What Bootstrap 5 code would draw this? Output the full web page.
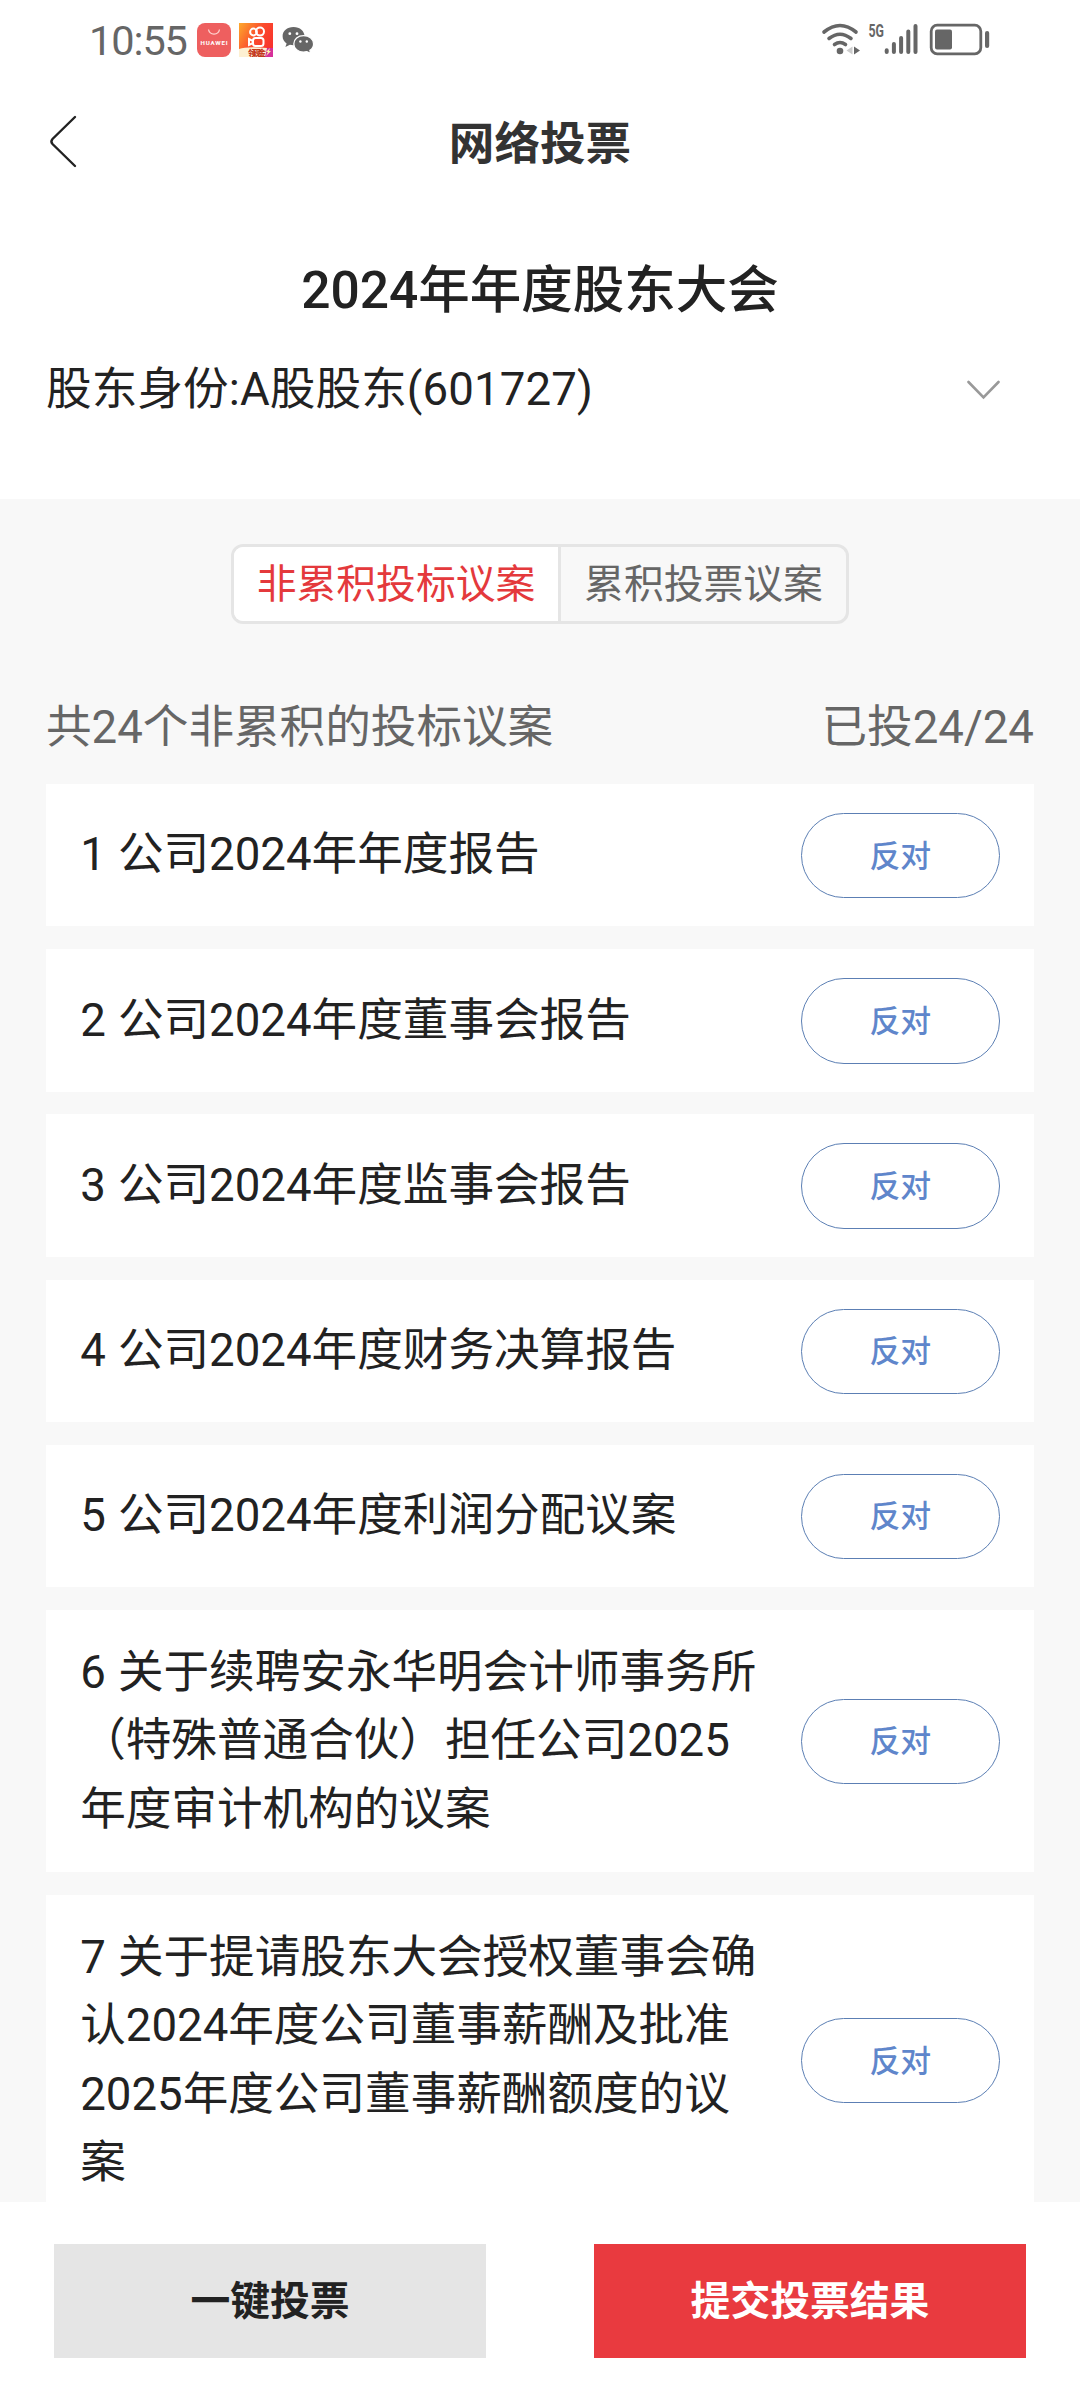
<!DOCTYPE html>
<html lang="zh-CN">
<head>
<meta charset="utf-8">
<meta name="viewport" content="width=device-width, initial-scale=1">
<title>网络投票</title>
<link href="https://cdn.jsdelivr.net/npm/bootstrap@5.3.0/dist/css/bootstrap.min.css" rel="stylesheet">
<style>
  body { font-family: Roboto, "Noto Sans CJK SC", sans-serif; font-size: 45.6px; line-height: 68.4px; color: #222; text-spacing-trim: space-all; }
  .screen { width: 1080px; height: 2400px; }
  .status-bar { height: 80px; padding: 0 89px; color: #666; }
  .clock { font-size: 41.5px; line-height: 80px; width: 108px; letter-spacing: -1.1px; padding-top: 2px; }
  .top-nav { display: grid; grid-template-columns: 120px 1fr 120px; height: 126px; color: #333; }
  .top-nav h1 { font-size: 45.6px; line-height: 68px; padding-top: 4px; }
  .meeting { height: 293px; padding: 46px 46px 0; }
  .meeting h2 { font-size: 51.5px; line-height: 77px; margin-bottom: 27px; font-weight: 500; }
  .identity { padding-right: 34px; letter-spacing: .1px; }
  .list-area { background: #f8f8f8; padding: 45px 46px 0; min-height: 0; }
  .switcher { width: 618px; height: 80px; border: 3px solid #e5e5e5; border-radius: 12px; overflow: hidden; font-size: 39.8px; }
  .switcher .btn { font-size: inherit; line-height: 60px; border: 0; border-radius: 0; color: #666; padding: 1px 0 0; }
  .switcher .btn.active { background: #fff; color: #e4393c; width: 327px; flex: none; border-right: 3px solid #e5e5e5; }
  .summary { color: #666; margin-top: 70px; margin-bottom: 21.6px; }
  .proposals { gap: 22.8px; }
  .proposal { background: #fff; border: 0; border-radius: 0; padding: 29px 34.2px 28px; flex: none; }
  .proposal p { width: 687px; word-spacing: .8px; }
  .vote-btn { width: 199px; height: 85.4px; font-size: 30.9px; color: #5f86cb; border: 1px solid #5c7fb4; font-weight: 500; padding: 2px 0 0; }
  .action-bar { height: 198px; }
  .action-bar .btn { width: 432px; height: 114px; font-size: 39.8px; border: 0; border-radius: 0; padding: 2px 0 0; }
  .btn-all, .btn-all:hover { background: #e5e5e5; color: #222; }
  .btn-submit, .btn-submit:hover { background: #e93a3f; color: #fff; }
</style>
</head>
<body class="bg-white">
<div class="screen d-flex flex-column overflow-hidden">

  <div class="status-bar d-flex align-items-center flex-shrink-0">
    <span class="clock">10:55</span>
    <svg width="34" height="34" viewBox="0 0 34 34">
      <rect width="34" height="34" rx="8" fill="#ee5f5f"/>
      <path d="M11.5 6.5a5.6 5.6 0 0 0 11 0" fill="none" stroke="#ffd3cf" stroke-width="1.3"/>
      <text x="17" y="22" text-anchor="middle" font-family="Roboto" font-weight="700" font-size="6.2" textLength="27" fill="#fff">HUAWEI</text>
    </svg>
    <svg class="ms-2" width="34" height="34" viewBox="0 0 34 34">
      <defs>
        <linearGradient id="ks" x1="0" y1="0" x2="1" y2=".6"><stop offset="0" stop-color="#fdaa2c"/><stop offset=".55" stop-color="#fb4b2c"/><stop offset="1" stop-color="#f8332d"/></linearGradient>
      </defs>
      <rect width="34" height="34" fill="url(#ks)"/>
      <g fill="none" stroke="#fff" stroke-width="2">
        <circle cx="14.5" cy="9" r="3.4"/><circle cx="21" cy="8.6" r="4"/>
        <rect x="14" y="15" width="10.5" height="8" rx="2.5"/><path d="M14 18l-4-2v6l4-2"/>
      </g>
      <path d="M0 26q8-3 28-1v9H0z" fill="#fdf0d2"/>
      <path d="M28 25h6v9h-8z" fill="#d6309a"/>
      <text x="18" y="32.8" text-anchor="middle" font-family="Noto Sans CJK SC" font-weight="900" font-size="8" textLength="18" fill="#c3371c">领现金</text>
      <path d="M31 25l-4 4h2l-2 4 5-5h-2z" fill="#fff3a8"/>
    </svg>
    <svg style="margin-left:9px" width="33" height="30" viewBox="0 0 33 30">
      <path d="M11.500 2C5 2 .6 6 .6 11.200c0 3 1.500 5.500 4 7.200L3.400 22l4.500-2.300c1.200.3 2.400.5 3.600.5 6.500 0 11-4 11-9S18 2 11.500 2z" fill="#666"/>
      <path d="M21.600 10.700c-5.600 0-9.800 3.500-9.800 8.200s4.200 8.200 9.800 8.200c1.200 0 2.300-.2 3.300-.5l3.900 2-.9-3.200c2.300-1.600 3.700-3.900 3.700-6.500 0-4.700-4.300-8.200-10-8.200z" fill="#666" stroke="#fff" stroke-width="1.300"/>
      <g fill="#fff"><circle cx="7.800" cy="8.700" r="1.400"/><circle cx="15" cy="8.700" r="1.400"/><circle cx="18.400" cy="16.500" r="1.200"/><circle cx="24.800" cy="16.500" r="1.200"/></g>
    </svg>
    <svg class="ms-auto" width="170" height="52" viewBox="821 14 170 52">
      <g fill="none" stroke="#666" stroke-width="3.600" stroke-linecap="round">
        <path d="M824 32q16-13 32 0"/><path d="M829 38.500q11-8.500 22 0"/><path d="M834.500 44.500q5.500-4 11 0"/>
      </g>
      <circle cx="840" cy="51" r="3.300" fill="#666"/>
      <path d="M852.500 46.500v8l-6-4z" fill="#ccc"/><path d="M854 46.500v8l6-4z" fill="#666"/>
      <text x="868.500" y="37" font-family="Roboto" font-weight="700" font-size="18" textLength="15.500" lengthAdjust="spacingAndGlyphs" fill="#666">5G</text>
      <g stroke="#666" stroke-width="4" stroke-linecap="round"><path d="M886.700 50.200v1.800M893.900 44v8M901.100 38v14M908.300 31.500V52M915.500 26v26"/></g>
      <rect x="931.200" y="25.200" width="49.600" height="28.600" rx="6" fill="none" stroke="#666" stroke-width="2.800"/>
      <rect x="935" y="29.500" width="17" height="20" rx="2" fill="#666"/>
      <rect x="985" y="31" width="4.200" height="17" rx="2.100" fill="#666"/>
    </svg>
  </div>

  <header class="top-nav align-items-center flex-shrink-0">
    <svg width="120" height="60" viewBox="0 0 120 60"><path d="M75 4L52.500 26q-2.200 2.500 0 5L75 53" fill="none" stroke="#222" stroke-width="2.400" stroke-linecap="round"/></svg>
    <h1 class="text-center fw-bold m-0">网络投票</h1>
  </header>

  <section class="meeting flex-shrink-0">
    <h2 class="text-center">2024年年度股东大会</h2>
    <div class="identity d-flex justify-content-between align-items-center">
      <span>股东身份:A股股东(601727)</span>
      <svg width="33" height="20" viewBox="0 0 33 20"><path d="M1.500 2L16.500 17.500 31.500 2" fill="none" stroke="#999" stroke-width="2.600" stroke-linecap="round"/></svg>
    </div>
  </section>

  <main class="list-area flex-fill overflow-hidden">
    <div class="switcher d-flex mx-auto">
      <button class="btn active">非累积投标议案</button>
      <button class="btn flex-fill">累积投票议案</button>
    </div>
    <div class="summary d-flex justify-content-between">
      <span>共24个非累积的投标议案</span><span>已投24/24</span>
    </div>
    <div class="proposals d-flex flex-column">
      <article class="proposal card flex-row align-items-center justify-content-between"><p class="m-0">1 公司2024年年度报告</p><button class="btn rounded-pill vote-btn">反对</button></article>
      <article class="proposal card flex-row align-items-center justify-content-between"><p class="m-0">2 公司2024年度董事会报告</p><button class="btn rounded-pill vote-btn">反对</button></article>
      <article class="proposal card flex-row align-items-center justify-content-between"><p class="m-0">3 公司2024年度监事会报告</p><button class="btn rounded-pill vote-btn">反对</button></article>
      <article class="proposal card flex-row align-items-center justify-content-between"><p class="m-0">4 公司2024年度财务决算报告</p><button class="btn rounded-pill vote-btn">反对</button></article>
      <article class="proposal card flex-row align-items-center justify-content-between"><p class="m-0">5 公司2024年度利润分配议案</p><button class="btn rounded-pill vote-btn">反对</button></article>
      <article class="proposal card flex-row align-items-center justify-content-between"><p class="m-0">6 关于续聘安永华明会计师事务所（特殊普通合伙）担任公司2025年度审计机构的议案</p><button class="btn rounded-pill vote-btn">反对</button></article>
      <article class="proposal card flex-row align-items-center justify-content-between"><p class="m-0">7 关于提请股东大会授权董事会确认2024年度公司董事薪酬及批准2025年度公司董事薪酬额度的议案</p><button class="btn rounded-pill vote-btn">反对</button></article>
    </div>
  </main>

  <footer class="action-bar d-flex justify-content-around align-items-center bg-white flex-shrink-0">
    <button class="btn btn-all fw-bold">一键投票</button>
    <button class="btn btn-submit fw-bold">提交投票结果</button>
  </footer>
</div>
<script src="https://cdn.jsdelivr.net/npm/bootstrap@5.3.0/dist/js/bootstrap.bundle.min.js"></script>
</body>
</html>
